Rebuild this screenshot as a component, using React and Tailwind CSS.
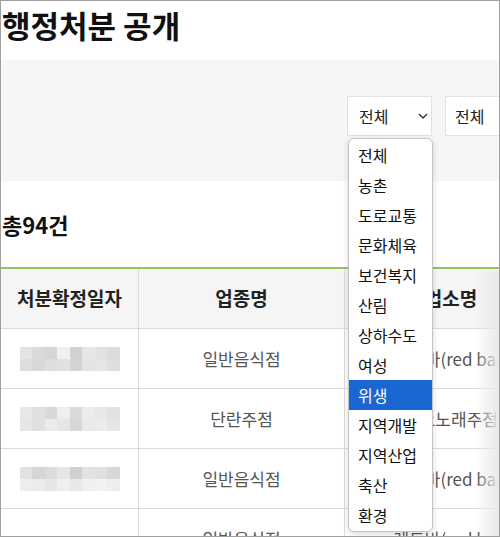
const font = { fontFamily: '"Noto Sans CJK KR", "Noto Sans", sans-serif' }

const options = ['전체', '농촌', '도로교통', '문화체육', '보건복지', '산림', '상하수도', '여성', '위생', '지역개발', '지역산업', '축산', '환경']

// 흐리게 처리된 날짜 칸
const blurRows = [
  [
    ['bg-[#e4e4e4]', 'bg-[#dadada]', 'bg-[#d6d6d6]', 'bg-[#f0f0f0]', 'bg-[#d2d2d2]', 'bg-[#e6e6e6]', 'bg-[#e2e2e2]', 'bg-[#dcdcdc]'],
    ['bg-[#dedede]', 'bg-[#d8d8d8]', 'bg-[#dddddd]', 'bg-[#e0e0e0]', 'bg-[#d4d4d4]', 'bg-[#e4e4e4]', 'bg-[#e6e6e6]', 'bg-[#dedede]'],
  ],
  [
    ['bg-[#e8e8e8]', 'bg-[#e0e0e0]', 'bg-[#d8d8d8]', 'bg-[#eeeeee]', 'bg-[#dadada]', 'bg-[#ececec]', 'bg-[#e8e8e8]', 'bg-[#e2e2e2]'],
    ['bg-[#e6e6e6]', 'bg-[#e0e0e0]', 'bg-[#ebebeb]', 'bg-[#e6e6e6]', 'bg-[#d8d8d8]', 'bg-[#eaeaea]', 'bg-[#ececec]', 'bg-[#e6e6e6]'],
  ],
  [
    ['bg-[#e2e2e2]', 'bg-[#d6d6d6]', 'bg-[#dcdcdc]', 'bg-[#e6e6e6]', 'bg-[#d0d0d0]', 'bg-[#e2e2e2]', 'bg-[#e0e0e0]', 'bg-[#d8d8d8]'],
    ['bg-[#eeeeee]', 'bg-[#ebebeb]', 'bg-[#e6e6e6]', 'bg-[#f0f0f0]', 'bg-[#e8e8e8]', 'bg-[#f0f0f0]', 'bg-[#f2f2f2]', 'bg-[#eeeeee]'],
  ],
]

const rows = [
  { kind: '일반음식점', name: '레드바(red bar)' },
  { kind: '단란주점', name: '가요노래주점' },
  { kind: '일반음식점', name: '레드바(red bar)' },
  { kind: '일반음식점', name: '레드바(red bar)' },
]

const Blur = ({ grid }) => (
  <div className="mx-auto flex w-[100px] flex-col">
    {grid.map((line, i) => (
      <div key={i} className="flex h-[12px]">
        {line.map((c, j) => (
          <i key={j} className={`block h-full flex-1 ${c}`} />
        ))}
      </div>
    ))}
  </div>
)

export default function App() {
  return (
    <div className="relative h-[537px] w-[500px] overflow-hidden border border-[#a0a0a0] bg-white" style={font}>
      <h1 className="h-[59px] pl-px pt-[3px] text-[31px] font-bold leading-[42px] text-[#111]">행정처분 공개</h1>

      <div className="flex h-[121px] gap-[13px] overflow-hidden bg-[#f6f6f6] pl-[346px] pt-[36px]">
        <div className="flex h-[40px] w-[85px] shrink-0 items-center justify-between border border-[#e2e2e2] bg-white pl-[11px] pr-[3px] text-[16px] text-[#222]">
          <span>전체</span>
          <svg width="10" height="6" viewBox="0 0 10 6" fill="none" stroke="#333" strokeWidth="1.4">
            <path d="M1 1l4 4 4-4" />
          </svg>
        </div>
        <div className="flex h-[40px] w-[85px] shrink-0 items-center border border-[#e2e2e2] bg-white pl-[9px] text-[16px] text-[#222]">
          전체
        </div>
      </div>

      <div className="flex h-[86px] items-center pl-px text-[22px] font-bold text-[#111]">총94건</div>

      <div className="w-[630px] border-t-2 border-[#9cc25f]">
        <div className="flex h-[60px] border-b border-[#dcdcdc] bg-[#f5f5f5] text-[19px] font-bold text-[#222]">
          <div className="flex w-[138px] items-center justify-center border-r border-[#dcdcdc]">처분확정일자</div>
          <div className="flex w-[206px] items-center justify-center border-r border-[#dcdcdc]">업종명</div>
          <div className="flex w-[212px] items-center justify-center">업소명</div>
        </div>
        {rows.map((r, i) => (
          <div key={i} className="flex h-[60px] border-b border-[#dcdcdc] text-[17px] text-[#555]">
            <div className="flex w-[138px] items-center border-r border-[#dcdcdc]">
              {blurRows[i] && <Blur grid={blurRows[i]} />}
            </div>
            <div className="flex w-[206px] items-center justify-center border-r border-[#dcdcdc]">{r.kind}</div>
            <div className="flex w-[212px] items-center justify-center whitespace-nowrap">{r.name}</div>
          </div>
        ))}
      </div>

      <div className="pointer-events-none absolute right-0 top-[270px] h-[270px] w-[24px] bg-gradient-to-r from-transparent to-[#e8e8e8]" />

      <ul className="absolute left-[347px] top-[137px] w-[85px] overflow-hidden rounded-[6px] border border-[#c4c4c4] bg-white py-px text-[16px] text-[#111] shadow-[0_2px_6px_rgba(0,0,0,0.15)]">
        {options.map((o) => (
          <li
            key={o}
            className={o === '위생' ? 'flex h-[30px] items-center bg-[#1a67d2] pl-[9px] text-white' : 'flex h-[30px] items-center pl-[9px]'}
          >
            {o}
          </li>
        ))}
      </ul>
    </div>
  )
}
